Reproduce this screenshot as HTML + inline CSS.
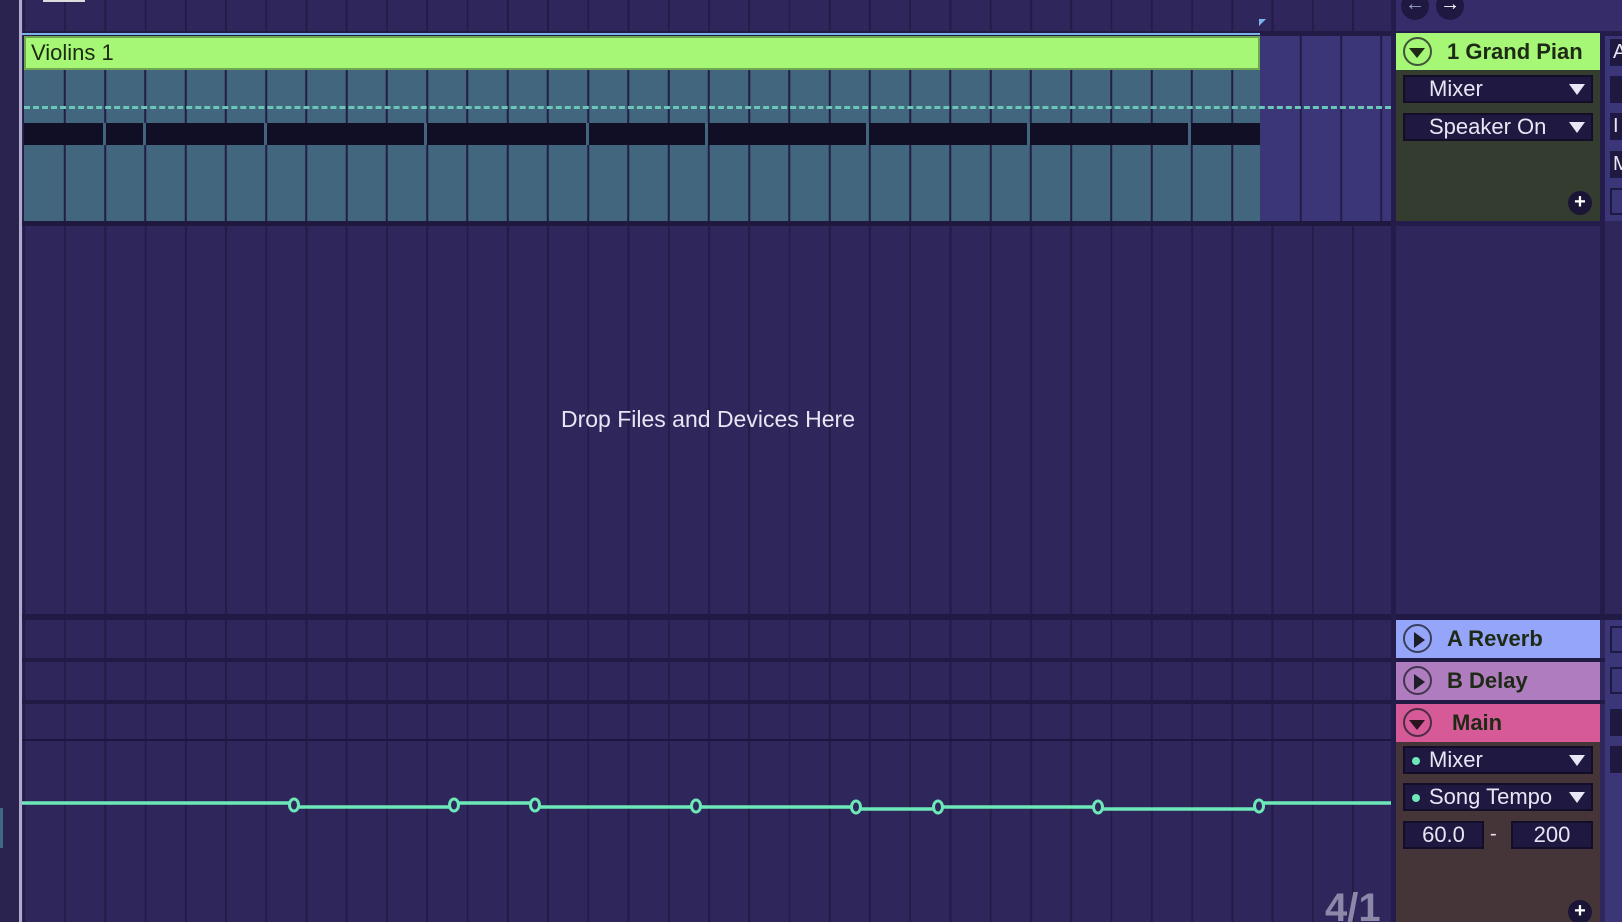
<!DOCTYPE html>
<html><head><meta charset="utf-8"><style>
*{margin:0;padding:0;box-sizing:border-box}
html{width:1622px;height:922px;overflow:hidden}
body{width:1622px;height:922px;overflow:hidden;background:#2f275c;font-family:"Liberation Sans",sans-serif;position:relative}
.a{position:absolute}
.grid{background-image:repeating-linear-gradient(90deg,transparent 0,transparent 38.25px,#231c47 38.25px,#231c47 40.25px);background-position:3.75px 0}
.dd{position:absolute;left:1403px;width:190px;height:28px;background:#1f1840;border:2px solid #120e28;color:#e8e6f4;font-size:22px;line-height:24px;padding-left:24px}
.dd .t{position:absolute;right:6px;top:7px;width:0;height:0;border-left:8px solid transparent;border-right:8px solid transparent;border-top:11px solid #e8e6f4}
.dot{position:absolute;left:7px;top:9px;width:8px;height:8px;border-radius:50%;background:#6de8b8}
.hd{position:absolute;left:1396px;width:204px;font-size:22px;font-weight:bold;color:#1e2a16;line-height:38px}
.ic{position:absolute;left:7px;width:29px;height:29px;border-radius:50%;border:2.5px solid rgba(30,30,40,.75)}
.plus{position:absolute;width:24px;height:24px;border-radius:50%;background:#1a1436;color:#fff;font-size:20px;line-height:23px;text-align:center;font-weight:bold}
</style></head><body>
<div class="a" style="left:0;top:0;width:19px;height:922px;background:#2a2350"></div>
<div class="a" style="left:0;top:808px;width:3px;height:40px;background:#3d6b85"></div>
<div class="a" style="left:19px;top:0;width:3px;height:922px;background:#aeaccb"></div>
<div class="a grid" style="left:22px;top:0;width:1369px;height:922px;background-color:#2f275c"></div>
<div class="a" style="left:22px;top:31px;width:1369px;height:5px;background:#231c47"></div>
<div class="a" style="left:22px;top:33px;width:1238px;height:2px;background:#7ab4e8"></div>
<div class="a" style="left:43px;top:0;width:42px;height:2px;background:#ddd"></div>
<div class="a" style="left:1259px;top:19px;width:0;height:0;border-top:7px solid #7ab4e8;border-right:7px solid transparent"></div>
<div class="a grid" style="left:1260px;top:36px;width:131px;height:185px;background-color:#3b3678;background-position:1.75px 0"></div>
<div class="a" style="left:24px;top:36px;width:1236px;height:34px;background:#a6f776;border:2px solid #6fa84e;font-size:22px;color:#1c2a14;line-height:29px;padding-left:5px">Violins 1</div>
<div class="a grid" style="left:24px;top:70px;width:1236px;height:151px;background-color:#43667f;background-position:1.75px 0"></div>
<div class="a" style="left:24px;top:106px;width:1367px;height:0;border-top:3px dashed #6bc6b8"></div>
<div class="a" style="left:24px;top:123px;width:1236px;height:22px;background:#100f26"></div>
<div class="a" style="left:103px;top:123px;width:3px;height:22px;background:#43667f"></div>
<div class="a" style="left:143px;top:123px;width:3px;height:22px;background:#43667f"></div>
<div class="a" style="left:264px;top:123px;width:3px;height:22px;background:#43667f"></div>
<div class="a" style="left:424px;top:123px;width:3px;height:22px;background:#43667f"></div>
<div class="a" style="left:586px;top:123px;width:3px;height:22px;background:#43667f"></div>
<div class="a" style="left:705px;top:123px;width:3px;height:22px;background:#43667f"></div>
<div class="a" style="left:866px;top:123px;width:3px;height:22px;background:#43667f"></div>
<div class="a" style="left:1027px;top:123px;width:3px;height:22px;background:#43667f"></div>
<div class="a" style="left:1188px;top:123px;width:3px;height:22px;background:#43667f"></div>
<div class="a" style="left:22px;top:221px;width:1369px;height:5px;background:#1f1940"></div>
<div class="a" style="left:408px;top:406px;width:600px;text-align:center;color:#e8e6f4;font-size:23px">Drop Files and Devices Here</div>
<div class="a" style="left:22px;top:614px;width:1600px;height:6px;background:#211a45"></div>
<div class="a" style="left:22px;top:658px;width:1600px;height:4px;background:#211a45"></div>
<div class="a" style="left:22px;top:700px;width:1600px;height:4px;background:#211a45"></div>
<div class="a" style="left:22px;top:739px;width:1369px;height:2px;background:#1c1640"></div>
<svg class="a" style="left:0;top:0" width="1391" height="922">
<polyline fill="none" stroke="#6de8b8" stroke-width="3.5" points="22,803 294,803 294,807 454,807 454,803 535,803 535,807 696,807 696,807 856,807 856,809 938,809 938,807 1098,807 1098,809 1259,809 1259,803 1391,803"/>
<g fill="#2f275c" stroke="#6de8b8" stroke-width="3">
<ellipse cx="294" cy="805" rx="4.5" ry="6"/><ellipse cx="454" cy="805" rx="4.5" ry="6"/><ellipse cx="535" cy="805" rx="4.5" ry="6"/><ellipse cx="696" cy="806" rx="4.5" ry="6"/><ellipse cx="856" cy="807" rx="4.5" ry="6"/><ellipse cx="938" cy="807" rx="4.5" ry="6"/><ellipse cx="1098" cy="807" rx="4.5" ry="6"/><ellipse cx="1259" cy="806" rx="4.5" ry="6"/></g>
</svg>
<div class="a" style="left:1325px;top:886px;font-size:40px;font-weight:bold;color:#8c88a8">4/1</div>
<div class="a" style="left:1391px;top:0;width:5px;height:922px;background:#241d4b"></div>
<div class="a" style="left:1396px;top:0;width:226px;height:31px;background:#362c6a"></div>
<div class="a" style="left:1396px;top:31px;width:226px;height:5px;background:#241d4b"></div>
<div class="a" style="left:1401px;top:-8px;width:28px;height:28px;border-radius:50%;background:#1f1840;color:#9aa0c8;font-size:20px;text-align:center;line-height:24px;font-weight:bold">&#8592;</div>
<div class="a" style="left:1436px;top:-8px;width:28px;height:28px;border-radius:50%;background:#1f1840;color:#fff;font-size:20px;text-align:center;line-height:24px;font-weight:bold">&#8594;</div>
<div class="hd" style="top:33px;height:37px;background:#a6f776"><div class="ic" style="top:4px"></div><div class="a" style="left:13px;top:15px;border-left:8px solid transparent;border-right:8px solid transparent;border-top:10px solid #1e2a16"></div><span style="position:absolute;left:51px;top:0">1 Grand Pian</span></div>
<div class="a" style="left:1396px;top:70px;width:204px;height:151px;background:#343c30"></div>
<div class="dd" style="top:75px">Mixer<div class="t"></div></div>
<div class="dd" style="top:113px">Speaker On<div class="t"></div></div>
<div class="plus" style="left:1568px;top:191px">+</div>
<div class="a" style="left:1396px;top:221px;width:204px;height:5px;background:#241d4b"></div>
<div class="hd" style="top:620px;height:38px;background:#95a5f9"><div class="ic" style="top:4px"></div><div class="a" style="left:18px;top:12px;border-top:8px solid transparent;border-bottom:8px solid transparent;border-left:11px solid #1e1e2a"></div><span style="position:absolute;left:51px;top:0">A Reverb</span></div>
<div class="hd" style="top:662px;height:38px;background:#b07cc0"><div class="ic" style="top:4px"></div><div class="a" style="left:18px;top:12px;border-top:8px solid transparent;border-bottom:8px solid transparent;border-left:11px solid #1e1e2a"></div><span style="position:absolute;left:51px;top:0">B Delay</span></div>
<div class="hd" style="top:704px;height:38px;background:#d65a98"><div class="ic" style="top:4px"></div><div class="a" style="left:13px;top:16px;border-left:8px solid transparent;border-right:8px solid transparent;border-top:10px solid #2a1420"></div><span style="position:absolute;left:56px;top:0">Main</span></div>
<div class="a" style="left:1396px;top:742px;width:204px;height:180px;background:#453538"></div>
<div class="dd" style="top:746px"><div class="dot"></div>Mixer<div class="t"></div></div>
<div class="dd" style="top:783px"><div class="dot"></div>Song Tempo<div class="t"></div></div>
<div class="dd" style="top:821px;width:81px;padding:0;text-align:center">60.0</div>
<div class="a" style="left:1490px;top:823px;color:#e8e6f4;font-size:20px">-</div>
<div class="dd" style="top:821px;left:1511px;width:82px;padding:0;text-align:center">200</div>
<div class="plus" style="left:1568px;top:900px">+</div>
<div class="a" style="left:1600px;top:36px;width:5px;height:578px;background:#241d4b"></div>
<div class="a" style="left:1605px;top:36px;width:17px;height:185px;background:#3b3678"></div>
<div class="a" style="left:1605px;top:226px;width:17px;height:388px;background:#2f275c"></div>
<div class="a" style="left:1605px;top:620px;width:17px;height:302px;background:#3b3678"></div>
<div class="a" style="left:1610px;top:39px;width:14px;height:27px;background:#1f1840;color:#e8e6f4;font-size:20px;line-height:27px;padding-left:3px">A</div>
<div class="a" style="left:1610px;top:76px;width:14px;height:27px;background:#1f1840"></div>
<div class="a" style="left:1610px;top:113px;width:14px;height:27px;background:#1f1840;color:#e8e6f4;font-size:20px;line-height:27px;padding-left:3px">I</div>
<div class="a" style="left:1610px;top:151px;width:14px;height:27px;background:#1f1840;color:#e8e6f4;font-size:20px;line-height:27px;padding-left:3px">M</div>
<div class="a" style="left:1610px;top:188px;width:14px;height:27px;border:2px solid #1f1840"></div>
<div class="a" style="left:1610px;top:626px;width:14px;height:27px;border:2px solid #1f1840"></div>
<div class="a" style="left:1610px;top:667px;width:14px;height:27px;border:2px solid #1f1840"></div>
<div class="a" style="left:1610px;top:709px;width:14px;height:27px;background:#1f1840"></div>
<div class="a" style="left:1610px;top:746px;width:14px;height:27px;background:#1f1840"></div>
</body></html>
